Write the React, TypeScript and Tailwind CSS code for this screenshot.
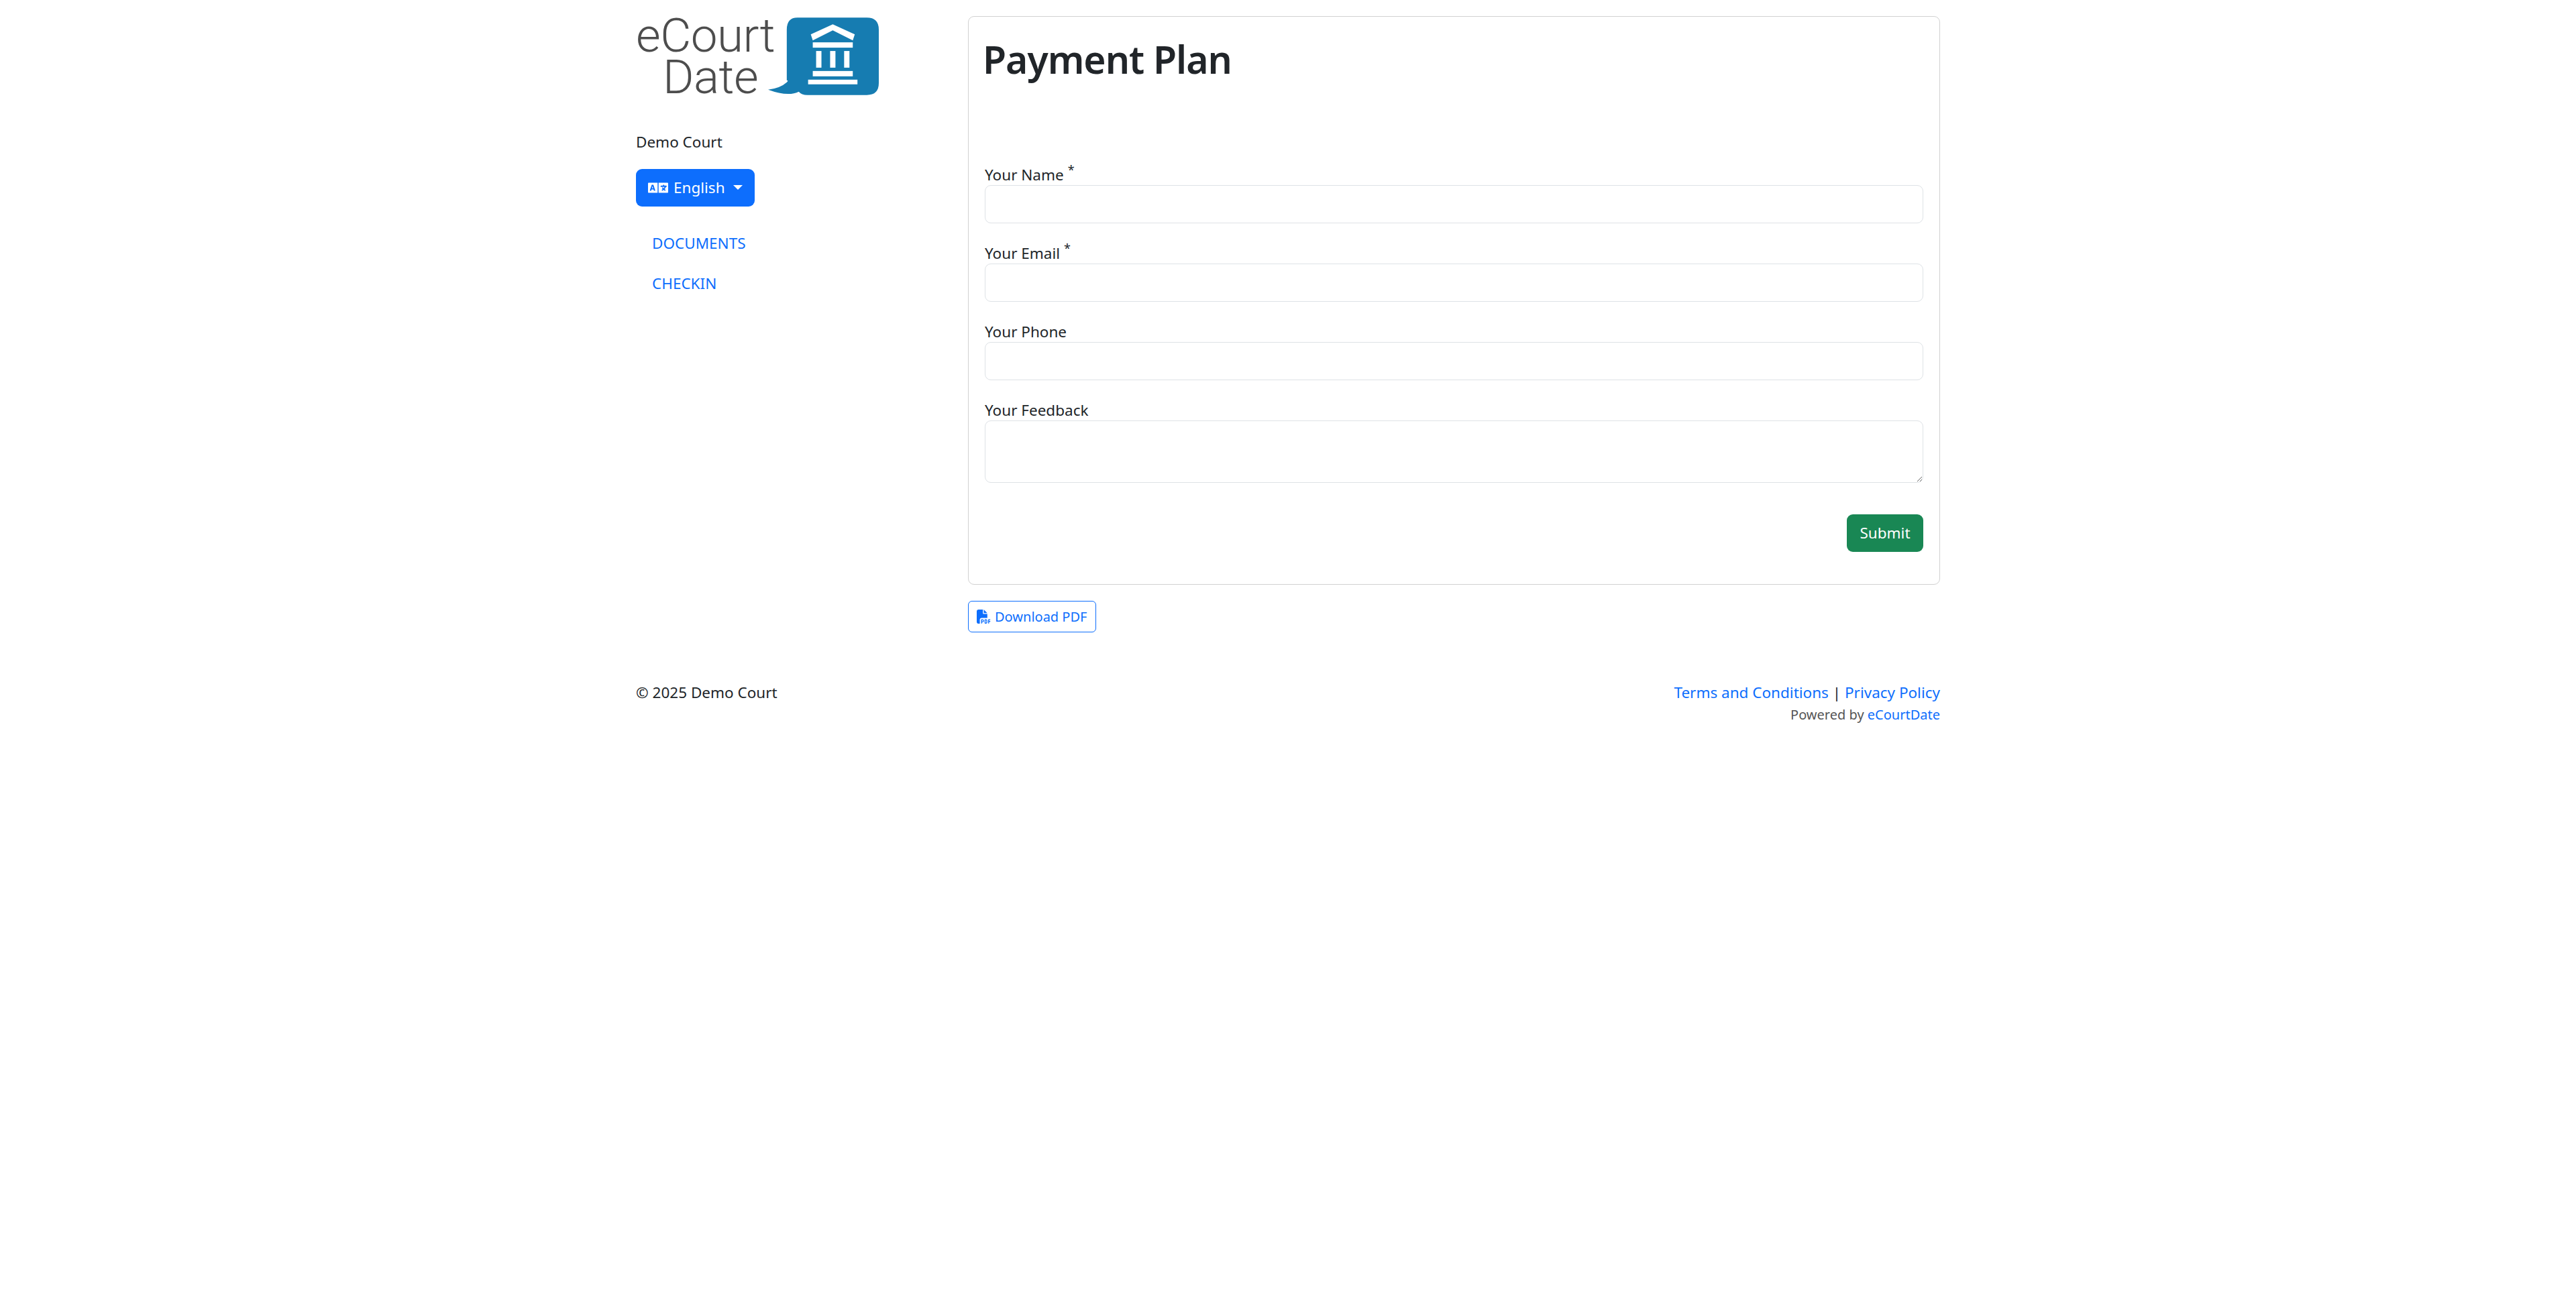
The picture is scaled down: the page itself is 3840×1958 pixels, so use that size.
import { FaLanguage } from 'react-icons/fa';
import { FaFilePdf } from 'react-icons/fa6';

const font = "font-['Noto_Sans','Open_Sans',sans-serif]";

const Logo = () => (
  <div className="flex items-start h-[142px]">
    <div className="w-[198px] pt-[22px] font-['Roboto',sans-serif] font-light text-[#4d4d4d] text-[71px] leading-[62px] tracking-[-0.5px] whitespace-nowrap">
      <div>eCourt</div>
      <div className="pl-[40px]">Date</div>
    </div>
    <svg viewBox="0 0 166 118" className="w-[165px] h-[118px] mt-[26px] -ml-[1px]">
      <path
        d="M44 0H148Q166 0 166 18V98Q166 116 148 116H59Q50 116 46 111Q30 119 0 108Q18 106 28 97Q31 94 28 94V18Q28 0 44 0Z"
        fill="#167cb1"
      />
      <path d="M64 25L97 10L130 25L127 34L97 19L67 34Z" fill="#fff" />
      <rect x="67" y="37" width="60" height="8" fill="#fff" />
      <rect x="72" y="50" width="8" height="25" fill="#fff" />
      <rect x="93" y="50" width="8" height="25" fill="#fff" />
      <rect x="114" y="50" width="8" height="25" fill="#fff" />
      <rect x="67" y="80" width="60" height="8" fill="#fff" />
      <rect x="60" y="93" width="74" height="7" fill="#fff" />
    </svg>
  </div>
);

const Sidebar = () => (
  <aside className="w-[495px] shrink-0">
    <Logo />
    <p className="mt-[52px] leading-[36px] text-[#212529]">Demo Court</p>
    <button className="mt-[22px] flex items-center h-[56px] w-[177px] pl-[18px] rounded-[9px] bg-[#0d6efd] text-white">
      <FaLanguage className="w-[30px] h-[30px] mr-[8px]" />
      <span>English</span>
      <span className="ml-[12px] -mt-[2px] border-x-[7px] border-x-transparent border-t-[7px] border-t-white" />
    </button>
    <nav className="mt-[25px] flex flex-col">
      <a className="px-[24px] py-[12px] leading-[36px] text-[#0d6efd]">DOCUMENTS</a>
      <a className="px-[24px] py-[12px] leading-[36px] text-[#0d6efd]">CHECKIN</a>
    </nav>
  </aside>
);

const Field = ({ label, required, area }: { label: string; required?: boolean; area?: boolean }) => (
  <div className="mb-[24px]">
    <label className="block h-[36px] leading-[42px] text-[#212529]">
      {label}
      {required && <sup className="ml-[6px] text-[18px]">*</sup>}
    </label>
    {area ? (
      <textarea className="block w-full h-[93px] border border-[#dee2e6] rounded-[9px] bg-white resize-y outline-none" />
    ) : (
      <input className="block w-full h-[57px] border border-[#dee2e6] rounded-[9px] bg-white outline-none" />
    )}
  </div>
);

const PlanForm = () => (
  <main className="w-[1449px] mt-[24px]">
    <div className="border border-[#d1d1d1] rounded-[9px] px-[24px] pt-[27px] pb-[48px]">
      <h1 className="h-[72px] leading-[72px] text-[57px] font-semibold tracking-[-1px] text-[#212529] -ml-[3px] whitespace-nowrap">
        Payment Plan
      </h1>
      <form className="mt-[116px]">
        <Field label="Your Name" required />
        <Field label="Your Email" required />
        <Field label="Your Phone" />
        <Field label="Your Feedback" area />
        <div className="flex justify-end pt-[23px]">
          <button type="button" className="h-[56px] w-[114px] rounded-[9px] bg-[#198754] text-white">
            Submit
          </button>
        </div>
      </form>
    </div>
    <button className="mt-[24px] flex items-center gap-[6px] h-[47px] w-[191px] px-[12px] border border-[#0d6efd] rounded-[6px] text-[#0d6efd] text-[20px] whitespace-nowrap">
      <FaFilePdf className="w-[21px] h-[21px]" />
      Download PDF
    </button>
  </main>
);

const Footer = () => (
  <footer className="flex justify-between mt-[72px] text-[#212529]">
    <span className="leading-[36px]">© 2025 Demo Court</span>
    <div className="text-right">
      <div className="leading-[36px]">
        <a className="text-[#0d6efd]">Terms and Conditions</a> | <a className="text-[#0d6efd]">Privacy Policy</a>
      </div>
      <div className="leading-[30px] text-[20px] text-[#555]">
        Powered by <a className="text-[#0d6efd]">eCourtDate</a>
      </div>
    </div>
  </footer>
);

export default function App() {
  return (
    <div className={`min-h-screen bg-white text-[22.5px] ${font}`}>
      <div className="w-[1944px] ml-[948px]">
        <div className="flex">
          <Sidebar />
          <PlanForm />
        </div>
        <Footer />
      </div>
    </div>
  );
}
